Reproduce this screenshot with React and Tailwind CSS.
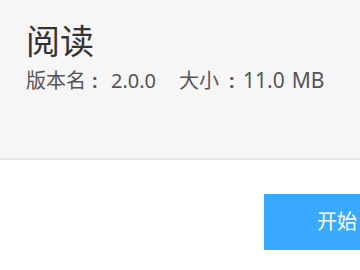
import React from 'react';

const font = { fontFamily: '"Noto Sans", "Noto Sans CJK SC", sans-serif' };

const App = () => {
    return (
        <main className="w-[360px] h-[270px] overflow-hidden bg-white" style={font}>
            <div className="h-[160px] bg-[#f6f6f6] border-b-2 border-[#e6e6e6] pl-[26px] pt-[24px]">
                <h1 className="text-[34px] leading-none text-[#333333]">阅读</h1>
                <div className="mt-[12px] flex items-center text-[20px] leading-none text-[#555555] whitespace-nowrap">
                    <span>版本名</span>
                    <span className="w-[25px] pl-[6px] font-semibold">:</span>
                    <span>2.0.0</span>
                    <span className="ml-[23px]">大小</span>
                    <span className="w-[24px] pl-[10px] font-semibold">:</span>
                    <span className="text-[21px]">11.0</span>
                    <span className="ml-[7px] text-[21px]">MB</span>
                </div>
            </div>
            <div className="flex pl-[264px] pt-[34px]">
                <button className="shrink-0 w-[146px] h-[56px] bg-[#39a9ff] text-white text-[20px] leading-none">
                    开始
                </button>
            </div>
        </main>
    );
};

export default App;
